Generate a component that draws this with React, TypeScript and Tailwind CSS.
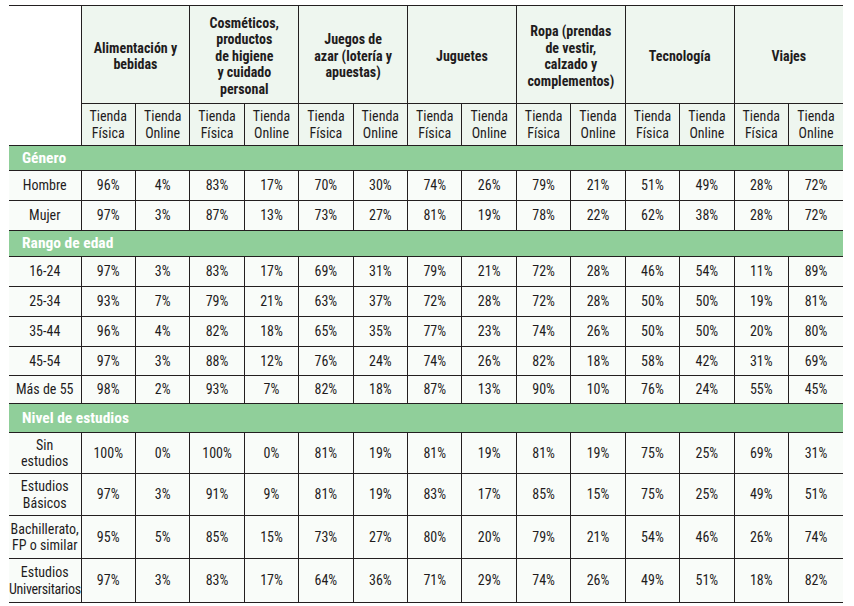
import React from "react";

type Row = { label: React.ReactNode; values: string[]; h: string };
type Section = { title: string; h: string; rows: Row[] };

const groups: React.ReactNode[] = [
  <>Alimentación y<br />bebidas</>,
  <>Cosméticos,<br />productos<br />de higiene<br />y cuidado<br />personal</>,
  <>Juegos de<br />azar (lotería y<br />apuestas)</>,
  <>Juguetes</>,
  <>Ropa (prendas<br />de vestir,<br />calzado y<br />complementos)</>,
  <>Tecnología</>,
  <>Viajes</>,
];

const sections: Section[] = [
  {
    title: "Género",
    h: "h-[25px]",
    rows: [
      { label: "Hombre", h: "h-[30px]", values: ["96%", "4%", "83%", "17%", "70%", "30%", "74%", "26%", "79%", "21%", "51%", "49%", "28%", "72%"] },
      { label: "Mujer", h: "h-[30px]", values: ["97%", "3%", "87%", "13%", "73%", "27%", "81%", "19%", "78%", "22%", "62%", "38%", "28%", "72%"] },
    ],
  },
  {
    title: "Rango de edad",
    h: "h-[26px]",
    rows: [
      { label: "16-24", h: "h-[30px]", values: ["97%", "3%", "83%", "17%", "69%", "31%", "79%", "21%", "72%", "28%", "46%", "54%", "11%", "89%"] },
      { label: "25-34", h: "h-[30px]", values: ["93%", "7%", "79%", "21%", "63%", "37%", "72%", "28%", "72%", "28%", "50%", "50%", "19%", "81%"] },
      { label: "35-44", h: "h-[30px]", values: ["96%", "4%", "82%", "18%", "65%", "35%", "77%", "23%", "74%", "26%", "50%", "50%", "20%", "80%"] },
      { label: "45-54", h: "h-[29px]", values: ["97%", "3%", "88%", "12%", "76%", "24%", "74%", "26%", "82%", "18%", "58%", "42%", "31%", "69%"] },
      { label: "Más de 55", h: "h-[28px]", values: ["98%", "2%", "93%", "7%", "82%", "18%", "87%", "13%", "90%", "10%", "76%", "24%", "55%", "45%"] },
    ],
  },
  {
    title: "Nivel de estudios",
    h: "h-[29px]",
    rows: [
      { label: <>Sin<br />estudios</>, h: "h-[41px]", values: ["100%", "0%", "100%", "0%", "81%", "19%", "81%", "19%", "81%", "19%", "75%", "25%", "69%", "31%"] },
      { label: <>Estudios<br />Básicos</>, h: "h-[42px]", values: ["97%", "3%", "91%", "9%", "81%", "19%", "83%", "17%", "85%", "15%", "75%", "25%", "49%", "51%"] },
      { label: <>Bachillerato,<br />FP o similar</>, h: "h-[43px]", values: ["95%", "5%", "85%", "15%", "73%", "27%", "80%", "20%", "79%", "21%", "54%", "46%", "26%", "74%"] },
      { label: <>Estudios<br /><span className="tracking-[-0.3px]">Universitarios</span></>, h: "h-[44px]", values: ["97%", "3%", "83%", "17%", "64%", "36%", "71%", "29%", "74%", "26%", "49%", "51%", "18%", "82%"] },
    ],
  },
];

export default function App() {
  return (
    <div className="w-[854px] h-[606px] overflow-hidden bg-white pt-[5px] pl-[9px] font-[family-name:'Liberation_Sans_Narrow','Roboto_Condensed','Noto_Sans',sans-serif] font-stretch-condensed text-[#1f1c1d]">
      <table className="w-[834px] table-fixed border-collapse text-[14px] leading-[16.5px]">
        <colgroup>
          <col className="w-[72px]" />
          {Array.from({ length: 14 }).map((_, i) => (
            <col key={i} className="w-[54.43px]" />
          ))}
        </colgroup>
        <thead>
          <tr className="h-[98px] border-t border-[#231f20]">
            <th rowSpan={2} className="bg-white"></th>
            {groups.map((g, i) => (
              <th
                key={i}
                colSpan={2}
                className="bg-[#eef6ef] border-l border-b border-[#231f20] font-bold text-center align-middle pt-[3px]"
              >
                {g}
              </th>
            ))}
          </tr>
          <tr className="h-[42px]">
            {groups.map((_, i) => (
              <React.Fragment key={i}>
                <th className="bg-[#eef6ef] border-l border-[#231f20] font-normal">
                  Tienda<br />Física
                </th>
                <th className="bg-[#eef6ef] border-l border-[#231f20] font-normal">
                  Tienda<br />Online
                </th>
              </React.Fragment>
            ))}
          </tr>
        </thead>
        <tbody>
          {sections.map((s) => (
            <React.Fragment key={s.title}>
              <tr className={`${s.h} border-y border-[#231f20]`}>
                <td
                  colSpan={15}
                  className="bg-[#90cf9a] pl-[13px] text-white font-bold text-[15.5px] align-middle"
                >
                  {s.title}
                </td>
              </tr>
              {s.rows.map((r, ri) => (
                <tr key={ri} className={`${r.h} border-b border-[#231f20]`}>
                  <td className="bg-[#f9fcf9] text-center align-middle whitespace-nowrap">{r.label}</td>
                  {r.values.map((v, vi) => (
                    <td
                      key={vi}
                      className="bg-[#f9fcf9] border-l border-[#231f20] text-center align-middle"
                    >
                      {v}
                    </td>
                  ))}
                </tr>
              ))}
            </React.Fragment>
          ))}
        </tbody>
      </table>
    </div>
  );
}
